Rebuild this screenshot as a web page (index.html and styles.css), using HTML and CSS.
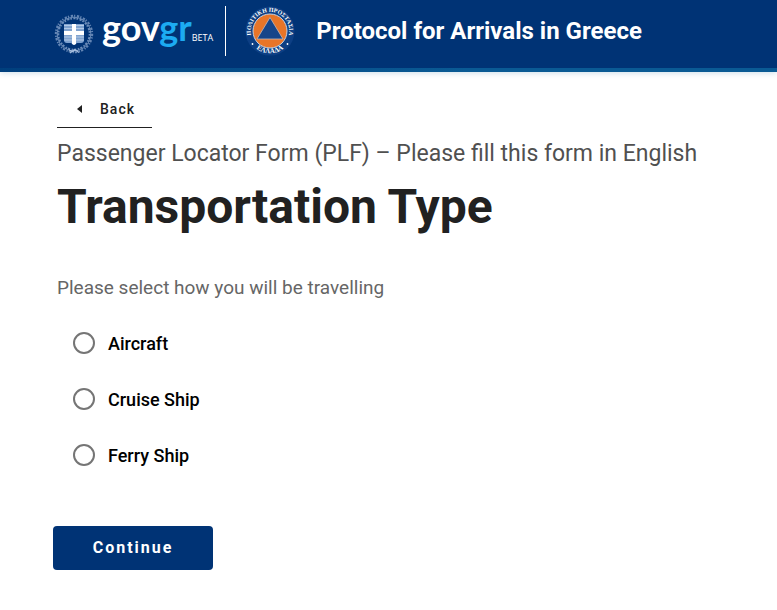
FILE: index.html
```html
<!DOCTYPE html>
<html lang="en">
<head>
<meta charset="utf-8">
<title>Protocol for Arrivals in Greece</title>
<meta name="viewport" content="width=device-width, initial-scale=1">
<link rel="stylesheet" href="styles.css">
</head>
<body>
<header class="header">
  <a class="brand" href="#">
    <svg class="emblem" viewBox="0 0 40 40" aria-hidden="true">
      <g fill="none" stroke="#a5bddd">
        <circle cx="20" cy="20" r="18.200" stroke-width="2" stroke-dasharray="2.300 1.100 1.200 1.700" opacity=".6"/>
        <circle cx="20" cy="20" r="15.600" stroke-width="1.800" stroke-dasharray="1.600 1.500 2.200 1" opacity=".65"/>
        <circle cx="20" cy="20" r="16.800" stroke-width="1" opacity=".6"/>
        <path d="M15 36l4 1.500 2-2 4 3M16 39l4-3 4 1" stroke-width="1.200"/>
      </g>
      <path d="M10 10h20v16c0 2-1 3-3 3h-4l-3 2-3-2h-4c-2 0-3-1-3-3z" fill="#7fa2cf"/>
      <path d="M10 11.500h20M10 14.500h20M10 23h20M10 26h20" stroke="#b4cae6" stroke-width="1"/>
      <path d="M18 10h4v7h8v4h-8v9l-2 1-2-1v-9h-8v-4h8z" fill="#fff"/>
    </svg>
    <span class="name"><span class="wordmark">gov<span class="wordmark-accent">gr</span></span><span class="beta">BETA</span></span>
  </a>
  <svg class="seal" viewBox="0 0 50 50" role="img" aria-label="Civil Protection">
    <defs>
      <path id="arc-top" d="M7.300 32.500A19.200 19.200 0 1 1 42.700 32.500"/>
      <path id="arc-bottom" d="M4.500 34.500A22.900 22.900 0 0 0 45.500 34.500"/>
    </defs>
    <circle cx="25" cy="25" r="24.500" fill="#0d3f84"/>
    <circle cx="25" cy="25" r="17" fill="#e87528" stroke="#c5d1e3" stroke-width="1"/>
    <path d="M25 11.500L38 33H12z" fill="#164589" stroke="#c5b7b5" stroke-width=".8"/>
    <g class="seal-text">
      <text><textPath href="#arc-top" startOffset="50%" text-anchor="middle">ΠΟΛΙΤΙΚΗ ΠΡΟΣΤΑΣΙΑ</textPath></text>
      <text class="seal-country"><textPath href="#arc-bottom" startOffset="50%" text-anchor="middle">ΕΛΛΑΔΑ</textPath></text>
    </g>
    <circle cx="7.500" cy="38" r=".9" fill="#fff"/>
    <circle cx="42.500" cy="38" r=".9" fill="#fff"/>
  </svg>
  <span class="service">Protocol for Arrivals in Greece</span>
</header>
<main class="page">
  <a class="back" href="#">
    <svg class="back-icon" viewBox="0 0 5 8" aria-hidden="true"><path d="M5 0v8L0 4z" fill="currentColor"/></svg>
    Back
  </a>
  <p class="caption">Passenger Locator Form (PLF) – Please fill this form in English</p>
  <h1 class="title">Transportation Type</h1>
  <form>
    <fieldset class="options">
      <legend class="hint">Please select how you will be travelling</legend>
      <label class="option"><input class="radio" type="radio" name="transport" value="aircraft">Aircraft</label>
      <label class="option"><input class="radio" type="radio" name="transport" value="cruise">Cruise Ship</label>
      <label class="option"><input class="radio" type="radio" name="transport" value="ferry">Ferry Ship</label>
    </fieldset>
    <button class="continue" type="submit">Continue</button>
  </form>
</main>
</body>
</html>
```
FILE: styles.css
```css
* {
  box-sizing: border-box;
}

body {
  margin: 0;
  background: #fff;
  color: #212121;
  font-family: Roboto, "Liberation Sans", sans-serif;
}

.header {
  display: flex;
  align-items: flex-start;
  padding: 6px 54px 16px;
  background: linear-gradient(90deg, #003f7d, #0a5a94 60%) bottom / 100% 4px no-repeat #003375;
  box-shadow: 0 1px 6px rgba(0, 90, 150, 0.2);
  color: #fff;
}

.brand {
  display: flex;
  align-items: flex-start;
  height: 50px;
  padding-right: 12px;
  border-right: 1px solid #fff;
  color: #fff;
  text-decoration: none;
}

.emblem {
  width: 40px;
  height: 40px;
  margin: 8px 8px 0 0;
}

.name {
  display: flex;
  align-items: baseline;
}

.wordmark {
  font: 700 36px/42px Lato, sans-serif;
}

.wordmark-accent {
  color: #1cabf2;
}

.beta {
  font: 9px/16px "Open Sans", sans-serif;
}

.seal {
  flex: none;
  width: 50px;
  height: 50px;
  margin: 0 21px 0 19px;
}

.seal-text {
  fill: #fff;
  font: bold 6px "Liberation Serif", serif;
}

.seal-country {
  font-size: 7px;
}

.service {
  font-size: 24px;
  font-weight: 700;
  line-height: 50px;
}

.page {
  padding: 19px 53px 40px 57px;
}

.back {
  display: inline-flex;
  align-items: center;
  gap: 18px;
  height: 37px;
  padding: 0 17px 0 20px;
  border-bottom: 1px solid #212121;
  color: #212121;
  font-size: 14px;
  font-weight: 500;
  letter-spacing: 1px;
  text-decoration: none;
}

.back-icon {
  width: 5px;
  height: 8px;
}

.caption {
  margin: 10px 0 0;
  color: #505050;
  font-size: 23px;
  line-height: 32px;
}

.title {
  margin: 7px 0 39px;
  font-size: 48px;
  line-height: 60px;
}

.options {
  min-width: 0;
  margin: 0;
  padding: 0 0 0 16px;
  border: 0;
}

.hint {
  margin: 0 0 15px -16px;
  padding: 0;
  color: #666;
  font-size: 19px;
  line-height: 24px;
}

.option {
  display: flex;
  align-items: center;
  gap: 13px;
  width: fit-content;
  height: 56px;
  color: #000;
  font-size: 18px;
  font-weight: 500;
}

.radio {
  appearance: none;
  width: 22px;
  height: 22px;
  margin: 0;
  border: 2px solid #757575;
  border-radius: 50%;
}

.radio:checked {
  border-width: 7px;
  border-color: #003375;
}

.continue {
  min-width: 160px;
  height: 44px;
  margin: 43px 0 0 -4px;
  padding: 0 38px;
  border: 0;
  border-radius: 4px;
  background: #003375;
  color: #fff;
  font: 700 16px/24px Roboto, sans-serif;
  letter-spacing: 2px;
}
```
